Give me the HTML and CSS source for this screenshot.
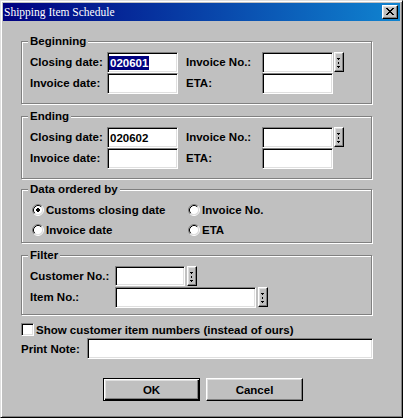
FILE: index.html
```html
<!DOCTYPE html>
<html>
<head>
<meta charset="utf-8">
<title>Shipping Item Schedule</title>
<link rel="stylesheet" href="styles.css">
</head>
<body>
<div class="window">
  <div class="titlebar">
    <span class="title">Shipping Item Schedule</span>
    <div class="close">
      <svg width="8" height="7" viewBox="0 0 8 7"><path fill="#000" d="M0 0h2v1H0zM6 0h2v1H6zM1 1h2v1H1zM5 1h2v1H5zM2 2h4v1H2zM3 3h2v1H3zM2 4h4v1H2zM1 5h2v1H1zM5 5h2v1H5zM0 6h2v1H0zM6 6h2v1H6z"/></svg>
    </div>
  </div>
  <div class="content">
    <div class="group g-begin">
      <span class="legend">Beginning</span>
      <div class="row">
        <span class="lbl">Closing date:</span>
        <div class="field"><span class="sel">020601</span></div>
        <span class="lbl2">Invoice No.:</span>
        <div class="field"></div>
        <div class="spin"><svg width="8" height="18" viewBox="0 0 8 18"><path fill="#000" d="M2 5h3v1H2zM3 6h1v1H3zM3 9h1v2H3zM2 13h3v1H2zM3 14h1v1H3z"/></svg></div>
      </div>
      <div class="row">
        <span class="lbl">Invoice date:</span>
        <div class="field"></div>
        <span class="lbl2">ETA:</span>
        <div class="field"></div>
      </div>
    </div>

    <div class="group g-end">
      <span class="legend">Ending</span>
      <div class="row">
        <span class="lbl">Closing date:</span>
        <div class="field"><span class="val">020602</span></div>
        <span class="lbl2">Invoice No.:</span>
        <div class="field"></div>
        <div class="spin"><svg width="8" height="18" viewBox="0 0 8 18"><path fill="#000" d="M2 5h3v1H2zM3 6h1v1H3zM3 9h1v2H3zM2 13h3v1H2zM3 14h1v1H3z"/></svg></div>
      </div>
      <div class="row">
        <span class="lbl">Invoice date:</span>
        <div class="field"></div>
        <span class="lbl2">ETA:</span>
        <div class="field"></div>
      </div>
    </div>

    <div class="group g-order">
      <span class="legend">Data ordered by</span>
      <div class="orow">
        <div class="opt opt1">
          <svg class="radio" width="12" height="12" viewBox="0 0 12 12"><circle cx="6" cy="6" r="4.5" fill="#fff"/><path d="M2.11 9.89A5.5 5.5 0 0 1 9.89 2.11" fill="none" stroke="#808080"/><path d="M9.89 2.11A5.5 5.5 0 0 1 2.11 9.89" fill="none" stroke="#fff"/><path d="M2.82 9.18A4.5 4.5 0 0 1 9.18 2.82" fill="none" stroke="#000"/><path d="M9.18 2.82A4.5 4.5 0 0 1 2.82 9.18" fill="none" stroke="#dfdfdf"/><path fill="#000" d="M5 4h2v1H5zM4 5h4v2H4zM5 7h2v1H5z"/></svg>
          <span>Customs closing date</span>
        </div>
        <div class="opt">
          <svg class="radio" width="12" height="12" viewBox="0 0 12 12"><circle cx="6" cy="6" r="4.5" fill="#fff"/><path d="M2.11 9.89A5.5 5.5 0 0 1 9.89 2.11" fill="none" stroke="#808080"/><path d="M9.89 2.11A5.5 5.5 0 0 1 2.11 9.89" fill="none" stroke="#fff"/><path d="M2.82 9.18A4.5 4.5 0 0 1 9.18 2.82" fill="none" stroke="#000"/><path d="M9.18 2.82A4.5 4.5 0 0 1 2.82 9.18" fill="none" stroke="#dfdfdf"/></svg>
          <span>Invoice No.</span>
        </div>
      </div>
      <div class="orow">
        <div class="opt opt1">
          <svg class="radio" width="12" height="12" viewBox="0 0 12 12"><circle cx="6" cy="6" r="4.5" fill="#fff"/><path d="M2.11 9.89A5.5 5.5 0 0 1 9.89 2.11" fill="none" stroke="#808080"/><path d="M9.89 2.11A5.5 5.5 0 0 1 2.11 9.89" fill="none" stroke="#fff"/><path d="M2.82 9.18A4.5 4.5 0 0 1 9.18 2.82" fill="none" stroke="#000"/><path d="M9.18 2.82A4.5 4.5 0 0 1 2.82 9.18" fill="none" stroke="#dfdfdf"/></svg>
          <span>Invoice date</span>
        </div>
        <div class="opt">
          <svg class="radio" width="12" height="12" viewBox="0 0 12 12"><circle cx="6" cy="6" r="4.5" fill="#fff"/><path d="M2.11 9.89A5.5 5.5 0 0 1 9.89 2.11" fill="none" stroke="#808080"/><path d="M9.89 2.11A5.5 5.5 0 0 1 2.11 9.89" fill="none" stroke="#fff"/><path d="M2.82 9.18A4.5 4.5 0 0 1 9.18 2.82" fill="none" stroke="#000"/><path d="M9.18 2.82A4.5 4.5 0 0 1 2.82 9.18" fill="none" stroke="#dfdfdf"/></svg>
          <span>ETA</span>
        </div>
      </div>
    </div>

    <div class="group g-filter">
      <span class="legend">Filter</span>
      <div class="row">
        <span class="lbl lbl-f">Customer No.:</span>
        <div class="field f-cust"></div>
        <div class="spin spin-f"><svg width="8" height="18" viewBox="0 0 8 18"><path fill="#000" d="M2 5h3v1H2zM3 6h1v1H3zM3 9h1v2H3zM2 13h3v1H2zM3 14h1v1H3z"/></svg></div>
      </div>
      <div class="row">
        <span class="lbl lbl-f">Item No.:</span>
        <div class="field f-item"></div>
        <div class="spin spin-f"><svg width="8" height="18" viewBox="0 0 8 18"><path fill="#000" d="M2 5h3v1H2zM3 6h1v1H3zM3 9h1v2H3zM2 13h3v1H2zM3 14h1v1H3z"/></svg></div>
      </div>
    </div>

    <div class="check-row">
      <div class="checkbox"></div>
      <span>Show customer item numbers (instead of ours)</span>
    </div>

    <div class="print-row">
      <span class="lbl-p">Print Note:</span>
      <div class="field f-note"></div>
    </div>

    <div class="buttons">
      <div class="btn btn-default">OK</div>
      <div class="btn">Cancel</div>
    </div>
  </div>
</div>
</body>
</html>
```

FILE: styles.css
```css
* { box-sizing: border-box; }

html, body {
  margin: 0;
  padding: 0;
}

body {
  background: #c0c0c0;
  font-family: "Liberation Sans", Arial, sans-serif;
  font-size: 11.5px;
  font-weight: bold;
  color: #000;
}

.window {
  width: 403px;
  height: 418px;
  padding: 2px;
  border: 1px solid;
  border-color: #dfdfdf #000 #000 #dfdfdf;
  box-shadow: inset 1px 1px #fff, inset -1px -1px #808080;
  background: #c0c0c0;
  display: flex;
  flex-direction: column;
}

.titlebar {
  height: 18px;
  flex: none;
  display: flex;
  align-items: center;
  justify-content: space-between;
  padding: 0 2px 0 1px;
  background: linear-gradient(90deg, #000080, #1084d0);
}

.title {
  font-family: "Liberation Serif", "Times New Roman", serif;
  font-size: 11.5px;
  font-weight: normal;
  color: #fff;
  line-height: 18px;
  white-space: nowrap;
}

.close {
  width: 16px;
  height: 14px;
  border: 1px solid;
  border-color: #fff #000 #000 #fff;
  box-shadow: inset -1px -1px #808080, inset 1px 1px #dfdfdf;
  background: #c0c0c0;
}

.close svg {
  display: block;
  margin: 2px 0 0 3px;
}

.content {
  padding: 20px 0 0 18px;
}

.group {
  position: relative;
  width: 351px;
  border: 1px solid #808080;
  box-shadow: inset 1px 1px #fff, 1px 1px #fff;
  padding: 10px 0 9px 8px;
}

.legend {
  position: absolute;
  top: -7px;
  left: 6px;
  padding: 0 2px;
  line-height: 13px;
  background: #c0c0c0;
  white-space: nowrap;
}

.g-end { margin-top: 12px; }

.g-order {
  margin-top: 10px;
  padding: 10px 0 2px 8px;
}

.g-filter {
  margin-top: 12px;
  padding: 10px 0 6px 8px;
}

.row {
  display: flex;
  align-items: flex-start;
  height: 21px;
}

.lbl {
  width: 77px;
  line-height: 21px;
  white-space: nowrap;
}

.lbl2 {
  width: 84px;
  padding-left: 8px;
  line-height: 21px;
  white-space: nowrap;
}

.lbl-f { width: 85px; }

.field {
  width: 71px;
  height: 21px;
  background: #fff;
  border: 1px solid;
  border-color: #808080 #fff #fff #808080;
  box-shadow: inset 1px 1px #000, inset -1px -1px #dfdfdf;
  display: flex;
  align-items: center;
  padding-left: 1px;
}

.f-cust { width: 70px; height: 20px; }
.f-item { width: 141px; }
.f-note { width: 286px; }

.sel, .val {
  line-height: 14px;
  padding: 0 1px;
}

.sel {
  background: #000080;
  color: #fff;
}

.spin {
  width: 10px;
  height: 20px;
  margin-left: 1px;
  border: 1px solid;
  border-color: #fff #000 #000 #fff;
  box-shadow: inset -1px -1px #808080, inset 1px 1px #dfdfdf;
  background: #c0c0c0;
}

.spin svg { display: block; }

.spin-f { margin-left: 2px; }

.orow {
  display: flex;
  align-items: center;
  height: 20px;
}

.opt {
  display: flex;
  align-items: center;
  gap: 2px;
  white-space: nowrap;
}

.opt1 { width: 156px; }

.radio {
  display: block;
  margin-left: 2px;
  flex: none;
}

.check-row {
  margin-top: 8px;
  height: 13px;
  display: flex;
  align-items: center;
  white-space: nowrap;
}

.checkbox {
  width: 13px;
  height: 13px;
  margin-right: 2px;
  background: #fff;
  border: 1px solid;
  border-color: #808080 #fff #fff #808080;
  box-shadow: inset 1px 1px #000, inset -1px -1px #dfdfdf;
}

.print-row {
  margin-top: 2px;
  display: flex;
  align-items: center;
}

.lbl-p {
  width: 66px;
  white-space: nowrap;
}

.buttons {
  margin-top: 19px;
  padding-left: 82px;
  display: flex;
  gap: 6px;
}

.btn {
  width: 97px;
  height: 23px;
  display: flex;
  align-items: center;
  justify-content: center;
  border: 1px solid;
  border-color: #fff #000 #000 #fff;
  box-shadow: inset -1px -1px #808080, inset 1px 1px #dfdfdf;
  background: #c0c0c0;
}

.btn-default {
  border: 1px solid #000;
  box-shadow: inset 1px 1px #fff, inset -1px -1px #000, inset -2px -2px #808080, inset 2px 2px #dfdfdf;
}
```
